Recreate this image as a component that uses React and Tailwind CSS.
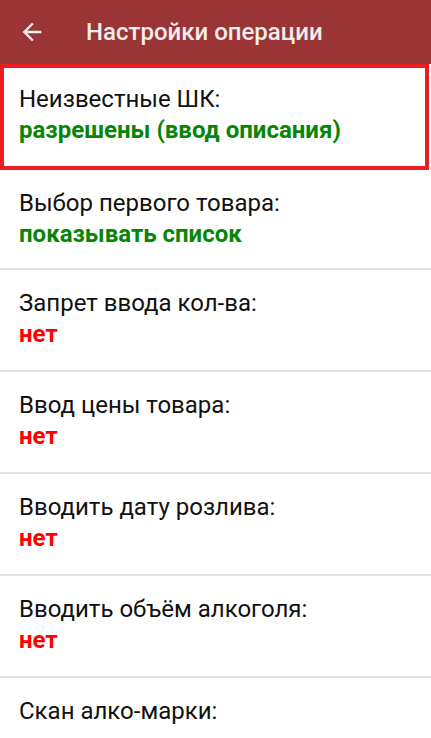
import React from "react";

const rows = [
  { label: "Выбор первого товара:", value: "показывать список", color: "text-[#078507]", h: "h-[100px]" },
  { label: "Запрет ввода кол-ва:", value: "нет", color: "text-[#ff0000]", h: "h-[102px]" },
  { label: "Ввод цены товара:", value: "нет", color: "text-[#ff0000]", h: "h-[102px]" },
  { label: "Вводить дату розлива:", value: "нет", color: "text-[#ff0000]", h: "h-[102px]" },
  { label: "Вводить объём алкоголя:", value: "нет", color: "text-[#ff0000]", h: "h-[102px]" },
];

function Row({ label, value, color, h }) {
  return (
    <div className={`flex flex-col border-b-2 border-[#e2e2e2] ${h} pl-[19px] pt-[18px]`}>
      <div className="text-[24px] leading-[31px] text-[#111]">{label}</div>
      <div className={`text-[24px] leading-[31px] font-bold ${color}`}>{value}</div>
    </div>
  );
}

export default function App() {
  return (
    <div className="w-[431px] h-[738px] overflow-hidden bg-white" style={{ fontFamily: "Roboto, 'Noto Sans', sans-serif" }}>
      <div className="h-[64px] bg-[#9b3535] flex items-center">
        <svg className="ml-[18px]" width="28" height="28" viewBox="0 0 24 24" fill="#f5f0f0">
          <path d="M20 11H7.83l5.59-5.59L12 4l-8 8 8 8 1.41-1.41L7.83 13H20v-2z" />
        </svg>
        <div className="ml-[40px] text-[24px] font-medium text-[#f3eeee] leading-none">Настройки операции</div>
      </div>
      <div className="mr-[2px] h-[106px] border-4 border-[#ed1c24] pl-[15px] pt-[16px]">
        <div className="text-[24px] leading-[31px] text-[#111]">Неизвестные ШК:</div>
        <div className="text-[24px] leading-[31px] font-bold text-[#078507]">разрешены (ввод описания)</div>
      </div>
      {rows.map((r) => (
        <Row key={r.label} {...r} />
      ))}
      <div className="pl-[19px] pt-[18px]">
        <div className="text-[24px] leading-[31px] text-[#111]">Скан алко-марки:</div>
      </div>
    </div>
  );
}
